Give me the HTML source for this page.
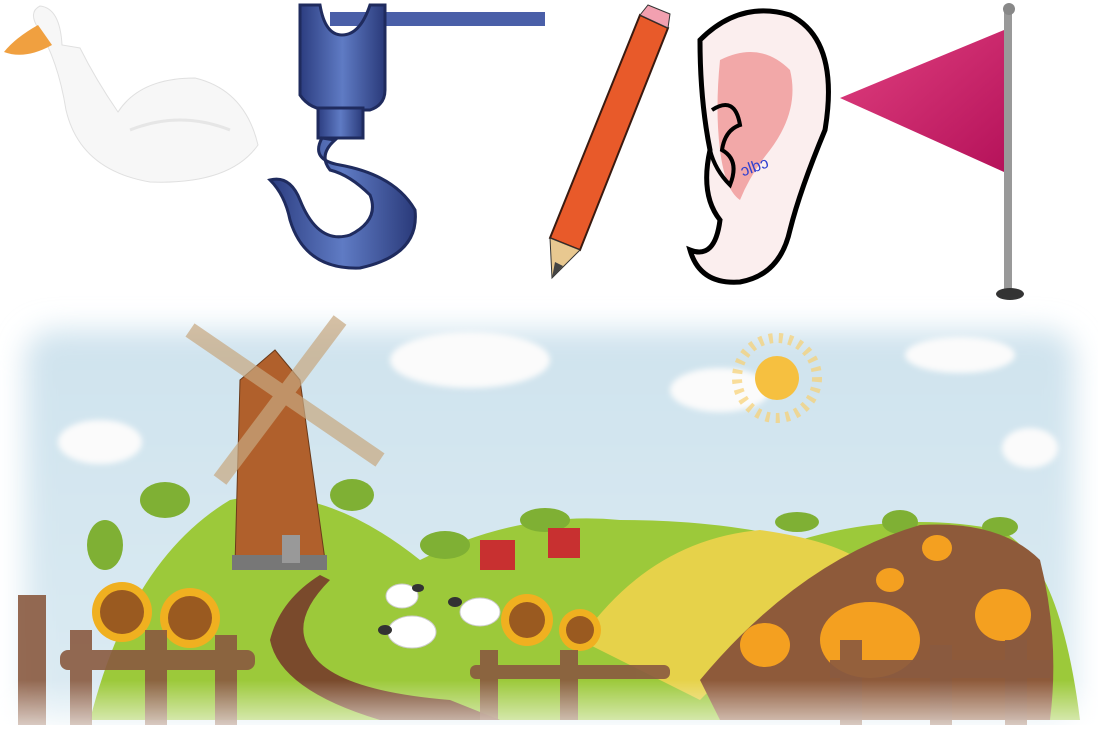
<!DOCTYPE html>
<html><head><meta charset="utf-8"><style>
html,body{margin:0;padding:0;background:#fff;width:1098px;height:750px;overflow:hidden}
svg{display:block}
</style></head><body>
<svg width="1098" height="750" viewBox="0 0 1098 750" xmlns="http://www.w3.org/2000/svg">
<defs>
<filter id="b" x="-10%" y="-10%" width="120%" height="120%"><feGaussianBlur stdDeviation="14"/></filter>
<filter id="s" x="-20%" y="-20%" width="140%" height="140%"><feGaussianBlur stdDeviation="3"/></filter>
<linearGradient id="sky" x1="0" y1="0" x2="0" y2="1"><stop offset="0" stop-color="#cfe3ee"/><stop offset="1" stop-color="#dcebf3"/></linearGradient>
<linearGradient id="hk" x1="0" y1="0" x2="1" y2="0"><stop offset="0" stop-color="#2c3d80"/><stop offset=".5" stop-color="#5f7bc4"/><stop offset="1" stop-color="#2a3a7a"/></linearGradient>
<linearGradient id="fl" x1="0" y1="0" x2="1" y2="1"><stop offset="0" stop-color="#e0407f"/><stop offset="1" stop-color="#b5125a"/></linearGradient>
<linearGradient id="fade" x1="0" y1="0" x2="0" y2="1"><stop offset="0" stop-color="#fff" stop-opacity="0"/><stop offset="1" stop-color="#fff" stop-opacity="1"/></linearGradient>
</defs>
<!-- goose -->
<g>
<path d="M62 45 Q60 8 40 6 Q28 12 38 28 Q58 60 66 110 Q80 170 150 182 Q230 185 258 145 Q245 90 195 78 Q140 78 118 112 Q96 80 80 48 Z" fill="#f7f7f7" stroke="#e0e0e0"/>
<path d="M38 25 Q15 38 4 52 Q25 60 52 45 Z" fill="#f0a040"/>
<path d="M130 130 Q180 110 230 130" stroke="#e6e6e6" stroke-width="3" fill="none"/>
</g>
<!-- hook -->
<g>
<rect x="330" y="12" width="215" height="14" fill="#4a5fa8"/>
<path d="M300 5 L300 95 Q310 110 330 110 L370 110 Q385 105 385 90 L385 5 L370 5 Q360 35 342 35 Q325 35 320 5 Z" fill="url(#hk)" stroke="#1f2b5e" stroke-width="3"/>
<rect x="318" y="108" width="45" height="30" fill="url(#hk)" stroke="#1f2b5e" stroke-width="3"/>
<path d="M322 138 Q310 160 340 165 Q395 175 415 210 Q420 255 360 268 Q305 270 290 220 Q285 195 270 180 Q290 175 300 200 Q318 245 350 235 Q380 220 370 195 Q350 175 330 170 Q318 155 335 140 Z" fill="url(#hk)" stroke="#1f2b5e" stroke-width="3"/>
</g>
<!-- pencil -->
<g>
<path d="M640 15 L668 28 L580 250 L550 238 Z" fill="#e85a2a" stroke="#3a1a10" stroke-width="2"/>
<path d="M640 15 L648 5 L670 14 L668 28 Z" fill="#f2a0b0" stroke="#333"/>
<path d="M550 238 L580 250 L552 278 Z" fill="#e8c890" stroke="#333"/>
<path d="M555 262 L563 266 L552 278 Z" fill="#444"/>
</g>
<!-- ear -->
<g>
<path d="M700 40 Q740 0 790 15 Q840 40 825 130 Q800 190 790 230 Q780 275 740 282 Q700 285 690 250 Q715 260 720 220 Q700 195 710 150 Q700 100 700 40 Z" fill="#fbeeee" stroke="#000" stroke-width="5"/>
<path d="M720 60 Q760 40 790 70 Q800 110 770 150 Q750 175 740 200 Q725 190 720 150 Q715 110 720 60Z" fill="#f2a8a8"/>
<path d="M712 110 Q735 95 740 125 Q725 130 722 150 Q740 160 730 185 Q715 170 710 150" stroke="#000" stroke-width="4" fill="none"/>
<text x="740" y="170" font-family="Liberation Sans, sans-serif" font-size="16" fill="#3040d0" transform="rotate(-20 760 165)">ɔlbɔ</text>
</g>
<!-- flag -->
<g>
<rect x="1004" y="10" width="8" height="280" fill="#999"/>
<circle cx="1009" cy="9" r="6" fill="#888"/>
<ellipse cx="1010" cy="294" rx="14" ry="6" fill="#333"/>
<path d="M1004 30 L840 98 L1004 172 Z" fill="url(#fl)"/>
</g>
<!-- landscape -->
<g>
<rect x="25" y="330" width="1050" height="400" rx="30" fill="url(#sky)" filter="url(#b)"/>
<g fill="#fbfbfb" filter="url(#s)">
<ellipse cx="470" cy="360" rx="80" ry="28"/><ellipse cx="720" cy="390" rx="50" ry="22"/>
<ellipse cx="100" cy="442" rx="42" ry="22"/><ellipse cx="960" cy="355" rx="55" ry="18"/>
<ellipse cx="1030" cy="448" rx="28" ry="20"/>
</g>
<circle cx="777" cy="378" r="22" fill="#f6c040"/>
<circle cx="777" cy="378" r="40" fill="none" stroke="#f8d070" stroke-width="10" stroke-dasharray="4 6" opacity=".7"/>
<path d="M90 720 Q130 560 230 500 Q320 480 420 560 Q520 510 620 520 Q720 520 800 540 Q900 510 1000 530 Q1060 560 1080 720 Z" fill="#9cc93a"/>
<g fill="#7fb034"><ellipse cx="165" cy="500" rx="25" ry="18"/><ellipse cx="352" cy="495" rx="22" ry="16"/><ellipse cx="545" cy="520" rx="25" ry="12"/><ellipse cx="105" cy="545" rx="18" ry="25"/><ellipse cx="445" cy="545" rx="25" ry="14"/><ellipse cx="797" cy="522" rx="22" ry="10"/><ellipse cx="900" cy="522" rx="18" ry="12"/><ellipse cx="1000" cy="527" rx="18" ry="10"/></g>
<path d="M580 640 Q650 540 760 530 Q830 540 860 560 Q800 600 700 700 Z" fill="#e6d24a"/>
<path d="M700 680 Q800 560 920 525 Q1000 520 1040 560 Q1060 640 1050 720 L720 720 Z" fill="#8e5a3a"/>
<path d="M330 580 Q290 620 310 650 Q330 690 450 700 L500 720 L380 720 Q280 690 270 640 Q280 600 320 575 Z" fill="#7a4a2c"/>
<path d="M240 380 L275 350 L300 380 L325 560 L235 565 Z" fill="#b0602c" stroke="#6a3a1a"/>
<rect x="232" y="555" width="95" height="15" fill="#777"/>
<rect x="282" y="535" width="18" height="28" fill="#999"/>
<path d="M190 330 L380 460 M340 320 L220 480" stroke="#c8a880" stroke-width="16" opacity=".7"/>
<rect x="480" y="540" width="35" height="30" fill="#c83030"/><rect x="548" y="528" width="32" height="30" fill="#c83030"/>
<g fill="#fff" stroke="#ccc"><ellipse cx="402" cy="596" rx="16" ry="12"/><ellipse cx="480" cy="612" rx="20" ry="14"/><ellipse cx="412" cy="632" rx="24" ry="16"/></g>
<g fill="#333"><ellipse cx="418" cy="588" rx="6" ry="4"/><ellipse cx="455" cy="602" rx="7" ry="5"/><ellipse cx="385" cy="630" rx="7" ry="5"/></g>
<g fill="#f0b020"><circle cx="122" cy="612" r="30"/><circle cx="190" cy="618" r="30"/><circle cx="527" cy="620" r="26"/><circle cx="580" cy="630" r="21"/></g>
<g fill="#9a5a20"><circle cx="122" cy="612" r="22"/><circle cx="190" cy="618" r="22"/><circle cx="527" cy="620" r="18"/><circle cx="580" cy="630" r="14"/></g>
<g fill="#f4a020"><ellipse cx="765" cy="645" rx="25" ry="22"/><ellipse cx="870" cy="640" rx="50" ry="38"/><ellipse cx="1003" cy="615" rx="28" ry="26"/><ellipse cx="890" cy="580" rx="14" ry="12"/><ellipse cx="937" cy="548" rx="15" ry="13"/></g>
<g fill="#8a5a40" opacity=".9">
<rect x="18" y="595" width="28" height="130"/><rect x="60" y="650" width="195" height="20" rx="8"/>
<rect x="70" y="630" width="22" height="95"/><rect x="145" y="630" width="22" height="95"/><rect x="215" y="635" width="22" height="90"/>
<rect x="470" y="665" width="200" height="14" rx="6"/><rect x="480" y="650" width="18" height="70"/><rect x="560" y="650" width="18" height="70"/>
<rect x="830" y="660" width="220" height="18"/><rect x="840" y="640" width="22" height="85"/><rect x="930" y="645" width="22" height="80"/><rect x="1005" y="640" width="22" height="85"/>
</g>
<rect x="0" y="680" width="1098" height="70" fill="url(#fade)"/>
<rect x="0" y="725" width="1098" height="25" fill="#fff"/>
</g>
</svg>
</body></html>
